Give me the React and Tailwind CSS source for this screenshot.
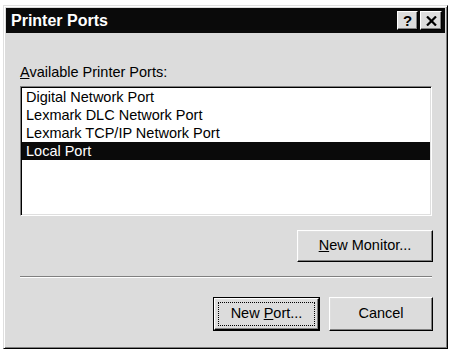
export default function App() {
  const raised =
    "border border-t-white border-l-white border-r-black border-b-black shadow-[inset_-1px_-1px_#808080,inset_1px_1px_#dfdfdf]";

  const ports = [
    "Digital Network Port",
    "Lexmark DLC Network Port",
    "Lexmark TCP/IP Network Port",
    "Local Port",
  ];
  const selected = 3;

  return (
    <div className="h-[351px] w-[451px] bg-white pl-[3px] pt-[5px] font-['Liberation_Sans',Arial,sans-serif] text-[14.5px] text-black">
      <div className="flex h-[344px] w-[445px] flex-col border border-t-[#dfdfdf] border-l-[#dfdfdf] border-r-black border-b-black bg-[#dcdcdc] p-[2px] shadow-[inset_1px_1px_#fff,inset_-1px_-1px_#808080]">
        {/* title bar */}
        <div className="flex h-[25px] items-center justify-between bg-[#0a0a0a] pl-[5px] pr-[3px]">
          <span className="text-[16px] font-bold leading-none text-white">Printer Ports</span>
          <div className="flex gap-[2px]">
            <div className={`flex h-[19px] w-[21px] items-center justify-center bg-[#dcdcdc] ${raised}`}>
              <span className="text-[15px] font-bold leading-none">?</span>
            </div>
            <div className={`flex h-[19px] w-[22px] items-center justify-center bg-[#dcdcdc] ${raised}`}>
              <svg width="11" height="10" viewBox="0 0 11 10">
                <path d="M1 0.5 L10 9.5 M10 0.5 L1 9.5" stroke="#000" strokeWidth="2.2" />
              </svg>
            </div>
          </div>
        </div>

        <div className="flex flex-col pl-[14px] pr-[13px]">
          <div className="mt-[31px] leading-[17px]">
            <span className="underline underline-offset-1">A</span>vailable Printer Ports:
          </div>

          {/* list box */}
          <div className="mt-[5px] h-[130px] border border-t-[#808080] border-l-[#808080] border-r-white border-b-white bg-white shadow-[inset_1px_1px_#000,inset_-1px_-1px_#dfdfdf]">
            <div className="flex flex-col p-[1px]">
              {ports.map((p, i) => (
                <div
                  key={p}
                  className={`h-[18px] pl-[4px] leading-[18px] ${i === selected ? "bg-[#0a0a0a] text-white" : ""}`}
                >
                  {p}
                </div>
              ))}
            </div>
          </div>

          <div className="mt-[14px] flex justify-end">
            <button className={`-mr-[1px] h-[32px] w-[136px] bg-[#dcdcdc] ${raised}`}>
              <span className="underline underline-offset-1">N</span>ew Monitor...
            </button>
          </div>

          <div className="mt-[14px] h-[2px] border-t border-t-[#808080] border-b border-b-white" />

          <div className="mt-[19px] flex justify-end gap-[9px]">
            <div className="h-[34px] w-[107px] border border-black">
              <button className={`h-full w-full bg-[#dcdcdc] p-[3px] ${raised}`}>
                <div className="flex h-full w-full items-center justify-center border border-dotted border-black">
                  <span>
                    New <span className="underline underline-offset-1">P</span>ort...
                  </span>
                </div>
              </button>
            </div>
            <button className={`-mr-[1px] h-[34px] w-[104px] bg-[#dcdcdc] ${raised}`}>Cancel</button>
          </div>
        </div>
      </div>
    </div>
  );
}
